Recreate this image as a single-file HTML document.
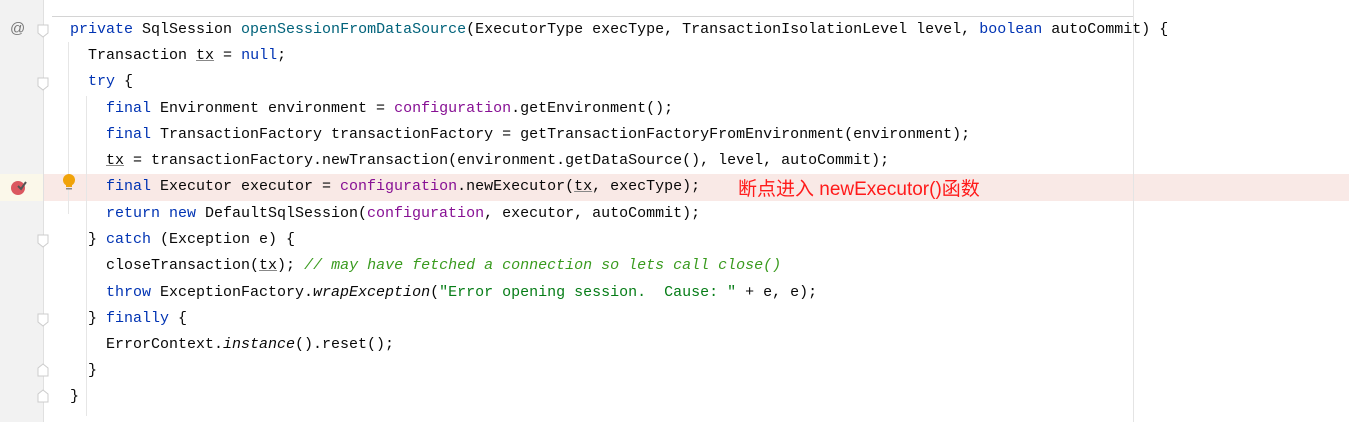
<!DOCTYPE html>
<html><head><meta charset="utf-8"><style>
body{margin:0;width:1349px;height:422px;background:#fff;position:relative;overflow:hidden;font-family:"Liberation Mono",monospace;}
.g{position:absolute;left:0;top:0;width:43px;height:422px;background:#f2f2f2;border-right:1px solid #e0e0e0;}
.l{position:absolute;left:0;height:26px;line-height:26px;font-size:15px;color:#080808;white-space:pre;}
.k{color:#0033b3}.f{color:#871094}.m{color:#00627a}.c{color:#3a9b1f;font-style:italic}.s{color:#067d17}.i{font-style:italic}.u{text-decoration:underline;text-decoration-color:#888}
.fold{position:absolute;left:37px}
.ig{position:absolute;width:1px;background:#e6e6e6}
</style></head><body>
<div style="position:absolute;left:0;top:174px;width:1349px;height:27px;background:#f9e9e6"></div>
<div class="g"></div>
<div style="position:absolute;left:0;top:174px;width:43px;height:27px;background:#fbf8ea"></div>
<div style="position:absolute;left:52px;top:16px;width:1081px;height:1px;background:#d4d4d4"></div>
<div style="position:absolute;left:1133px;top:0;width:1px;height:422px;background:#e4e4e4"></div>
<div class="ig" style="left:68px;top:42px;height:172px"></div>
<div class="ig" style="left:86px;top:96px;height:320px"></div>
<div style="position:absolute;left:10px;top:20px;font:15px 'Liberation Sans',sans-serif;color:#777">@</div>
<svg class="fold" style="top:24px" width="12" height="14"><path d="M1 1h10v8l-5 4-5-4z" fill="#fff" stroke="#ccc"/></svg>
<svg class="fold" style="top:77px" width="12" height="14"><path d="M1 1h10v8l-5 4-5-4z" fill="#fff" stroke="#ccc"/></svg>
<svg class="fold" style="top:234px" width="12" height="14"><path d="M1 1h10v8l-5 4-5-4z" fill="#fff" stroke="#ccc"/></svg>
<svg class="fold" style="top:313px" width="12" height="14"><path d="M1 1h10v8l-5 4-5-4z" fill="#fff" stroke="#ccc"/></svg>
<svg class="fold" style="top:363px" width="12" height="14"><path d="M1 13h10v-8l-5-4-5 4z" fill="#fff" stroke="#ccc"/></svg>
<svg class="fold" style="top:389px" width="12" height="14"><path d="M1 13h10v-8l-5-4-5 4z" fill="#fff" stroke="#ccc"/></svg>
<svg style="position:absolute;left:8px;top:177px" width="20" height="20"><circle cx="10" cy="11" r="7" fill="#db5860"/><path d="M10 9l3 3 5-7" stroke="#555" stroke-width="2" fill="none"/></svg>
<svg style="position:absolute;left:61px;top:173px" width="16" height="20"><circle cx="8" cy="7" r="6" fill="#f0a30a"/><rect x="5" y="12" width="6" height="2" fill="#f0a30a"/><rect x="5" y="15" width="6" height="1.5" fill="#888"/></svg>
<div class="l" style="top:17px;left:70px"><span class="k">private</span> SqlSession <span class="m">openSessionFromDataSource</span>(ExecutorType execType, TransactionIsolationLevel level, <span class="k">boolean</span> autoCommit) {</div>
<div class="l" style="top:43px;left:88px">Transaction <span class="u">tx</span> = <span class="k">null</span>;</div>
<div class="l" style="top:69px;left:88px"><span class="k">try</span> {</div>
<div class="l" style="top:96px;left:106px"><span class="k">final</span> Environment environment = <span class="f">configuration</span>.getEnvironment();</div>
<div class="l" style="top:122px;left:106px"><span class="k">final</span> TransactionFactory transactionFactory = getTransactionFactoryFromEnvironment(environment);</div>
<div class="l" style="top:148px;left:106px"><span class="u">tx</span> = transactionFactory.newTransaction(environment.getDataSource(), level, autoCommit);</div>
<div class="l" style="top:174px;left:106px"><span class="k">final</span> Executor executor = <span class="f">configuration</span>.newExecutor(<span class="u">tx</span>, execType);</div>
<div style="position:absolute;left:738px;top:174px;line-height:26px;font:19px 'Liberation Sans','Noto Sans CJK SC',sans-serif;color:#ff1a1a">断点进入 newExecutor()函数</div>
<div class="l" style="top:201px;left:106px"><span class="k">return new</span> DefaultSqlSession(<span class="f">configuration</span>, executor, autoCommit);</div>
<div class="l" style="top:227px;left:88px">} <span class="k">catch</span> (Exception e) {</div>
<div class="l" style="top:253px;left:106px">closeTransaction(<span class="u">tx</span>); <span class="c">// may have fetched a connection so lets call close()</span></div>
<div class="l" style="top:280px;left:106px"><span class="k">throw</span> ExceptionFactory.<span class="i">wrapException</span>(<span class="s">"Error opening session.  Cause: "</span> + e, e);</div>
<div class="l" style="top:306px;left:88px">} <span class="k">finally</span> {</div>
<div class="l" style="top:332px;left:106px">ErrorContext.<span class="i">instance</span>().reset();</div>
<div class="l" style="top:358px;left:88px">}</div>
<div class="l" style="top:384px;left:70px">}</div>
</body></html>
